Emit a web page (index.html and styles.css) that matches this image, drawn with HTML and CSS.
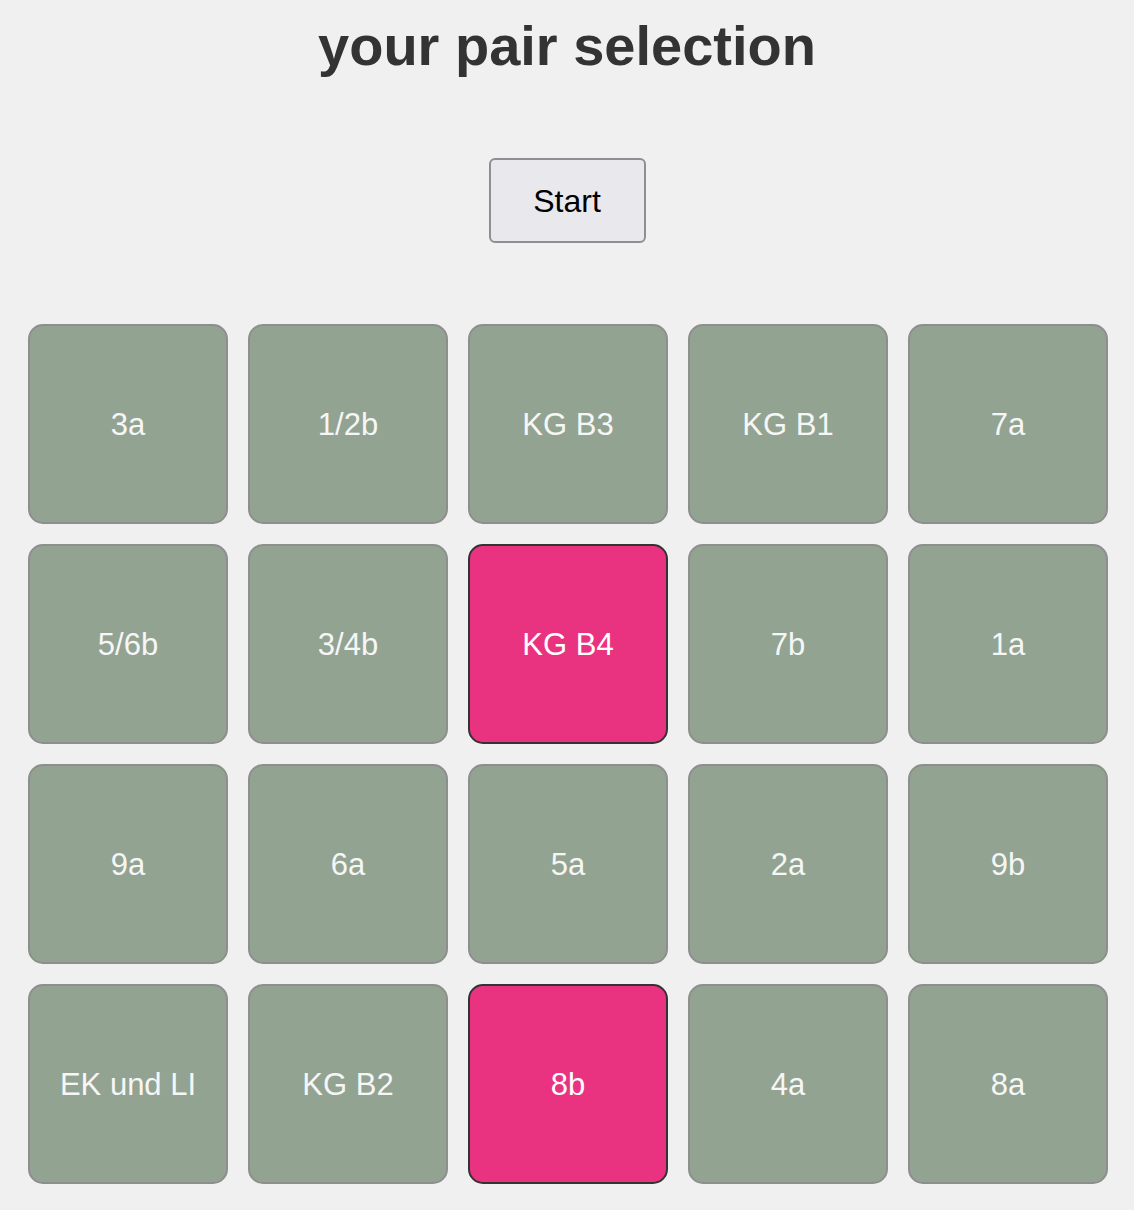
FILE: index.html
```html
<!DOCTYPE html>
<html lang="en">
<head>
<meta charset="utf-8">
<title>your pair selection</title>
<link rel="stylesheet" href="styles.css">
</head>
<body>
<main class="page">
  <h1 class="title">your pair selection</h1>
  <button class="start-btn" type="button">Start</button>
  <div class="grid">
    <div class="card">3a</div>
    <div class="card">1/2b</div>
    <div class="card">KG B3</div>
    <div class="card">KG B1</div>
    <div class="card">7a</div>
    <div class="card">5/6b</div>
    <div class="card">3/4b</div>
    <div class="card card-selected">KG B4</div>
    <div class="card">7b</div>
    <div class="card">1a</div>
    <div class="card">9a</div>
    <div class="card">6a</div>
    <div class="card">5a</div>
    <div class="card">2a</div>
    <div class="card">9b</div>
    <div class="card">EK und LI</div>
    <div class="card">KG B2</div>
    <div class="card card-selected">8b</div>
    <div class="card">4a</div>
    <div class="card">8a</div>
  </div>
</main>
</body>
</html>
```

FILE: styles.css
```css
html, body {
  margin: 0;
  padding: 0;
  background: #f0f0f0;
}

body {
  font-family: "Liberation Sans", Arial, Helvetica, sans-serif;
}

.page {
  display: flex;
  flex-direction: column;
  align-items: center;
  padding-top: 14px;
}

.title {
  margin: 0;
  font-size: 56px;
  line-height: 64px;
  font-weight: 700;
  color: #333333;
}

.start-btn {
  margin-top: 80px;
  width: 157px;
  height: 85px;
  box-sizing: border-box;
  background: #e9e8ed;
  border: 2px solid #8f8e94;
  border-radius: 6px;
  font-family: "Liberation Sans", Arial, Helvetica, sans-serif;
  font-size: 32px;
  color: #000000;
  padding: 2px 0 0;
}

.grid {
  margin-top: 81px;
  margin-left: 2px;
  display: grid;
  grid-template-columns: repeat(5, 200px);
  grid-auto-rows: 200px;
  gap: 20px;
}

.card {
  box-sizing: border-box;
  display: flex;
  align-items: center;
  justify-content: center;
  padding-top: 2px;
  background: #92a392;
  border: 2px solid #8e8e8e;
  border-radius: 15px;
  color: #f6f6f6;
  font-size: 31px;
}

.card-selected {
  background: #ea3380;
  border-color: #333333;
  color: #ffffff;
}
```
